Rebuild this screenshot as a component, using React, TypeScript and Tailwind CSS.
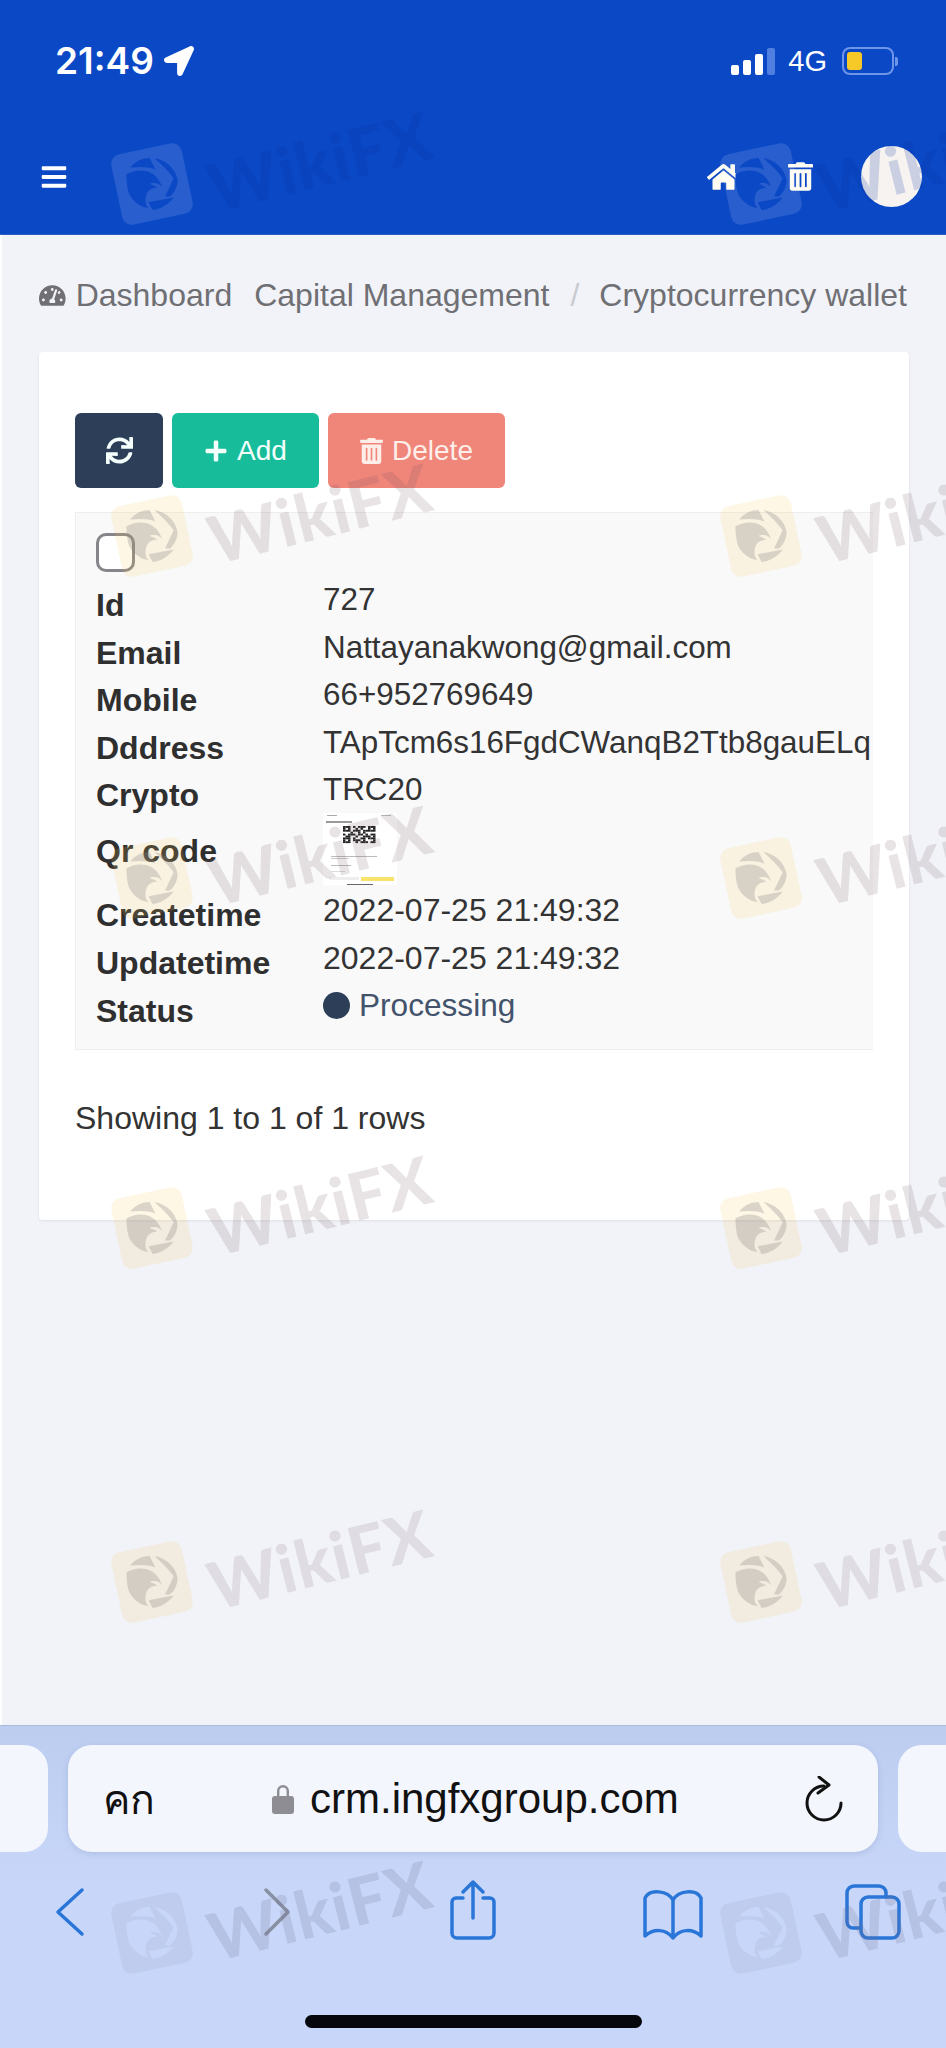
import { FaBars, FaHome, FaLocationArrow, FaPlus, FaSync, FaTachometerAlt, FaTrashAlt } from "react-icons/fa";

const marks = [
  { top: "top-[148px]", tile: "bg-[#ffffff]/12", bird: "text-[#0b48c6]", word: "text-[#062f9c]/18" },
  { top: "top-[500px]", tile: "bg-[#f8c95a]/15", bird: "text-[#8c8486]/30", word: "text-[#6e5a60]/16" },
  { top: "top-[842px]", tile: "bg-[#f8c95a]/15", bird: "text-[#8c8486]/30", word: "text-[#6e5a60]/16" },
  { top: "top-[1192px]", tile: "bg-[#f8c95a]/15", bird: "text-[#8c8486]/30", word: "text-[#6e5a60]/16" },
  { top: "top-[1546px]", tile: "bg-[#f8c95a]/15", bird: "text-[#8c8486]/30", word: "text-[#6e5a60]/14" },
  { top: "top-[1897px]", tile: "bg-[#8c8aa8]/15", bird: "text-[#c8d7f9]", word: "text-[#6c6c90]/20" },
];

const Watermark = ({ tile, bird, word }: { tile: string; bird: string; word: string }) => (
  <div className="flex items-center gap-[18px] w-[340px] shrink-0">
    <div className={`w-[72px] h-[72px] rounded-[10px] -rotate-[12deg] flex items-center justify-center shrink-0 ${tile}`}>
      <svg viewBox="0 0 55 56" className={`w-[54px] h-[54px] rotate-[12deg] ${bird}`} fill="currentColor">
        <path d="M1 18C8 14 16 13 23 15C30 17 35 23 38 31C35 28 33 27 30 27C28 27 26 27 25 28C28 29 31 30 33 32C28 32 24 34 22 38C20 44 20 49 24 53C15 52 6 45 3 36C1.5 30 1 24 1 18Z" />
        <path d="M5 11C10 4 18 1 25 1L31 13C24 10 14 10 5 11Z" />
        <path d="M30 1C42 3 52 12 54 24C54 30 51 37 46 41L41 41L50 22C44 14 38 8 30 1Z" />
        <path d="M24 47L50 42C44 50 36 54 28 55Z" />
      </svg>
    </div>
    <span className={`[font-family:Lato,sans-serif] font-black text-[66px] leading-none tracking-[1px] -rotate-[14deg] -translate-y-[23px] ${word}`}>WikiFX</span>
  </div>
);

const rows = [
  { label: "Id", value: "727" },
  { label: "Email", value: "Nattayanakwong@gmail.com" },
  { label: "Mobile", value: "66+952769649" },
  { label: "Dddress", value: "TApTcm6s16FgdCWanqB2Ttb8gauELq" },
  { label: "Crypto", value: "TRC20" },
];

const qrCells = [
  "1110101110111", "1010010100101", "1110111011111", "0001001010000", "1011101101011",
  "0110010011101", "1110100110111", "1010111010001", "1110010111011",
];

const QrThumb = () => (
  <svg viewBox="0 0 74 72" className="w-[74px] h-[72px] -mt-[7px] blur-[0.4px]">
    <rect width="74" height="72" fill="#ffffff" />
    <rect x="4" y="2" width="10" height="1" fill="#aaaaaa" />
    <rect x="58" y="2" width="10" height="1" fill="#bbbbbb" />
    <rect x="3" y="8" width="26" height="2" fill="#999999" />
    {qrCells.map((row, y) =>
      row.split("").map((c, x) =>
        c === "1" ? <rect key={`${x}-${y}`} x={20 + x * 2.5} y={13 + y * 1.9} width="2.5" height="1.9" fill="#222222" /> : null,
      ),
    )}
    <rect x="8" y="43" width="46" height="1" fill="#bbbbbb" />
    <rect x="8" y="45" width="18" height="1" fill="#cccccc" />
    <rect x="8" y="52" width="20" height="1" fill="#bbbbbb" />
    <rect x="8" y="58" width="14" height="1" fill="#dddddd" />
    <rect x="6" y="64" width="30" height="3" fill="#eeeeee" />
    <rect x="38" y="64" width="33" height="4" fill="#fbe36a" />
    <rect x="24" y="71" width="26" height="1" fill="#666666" />
  </svg>
);

const Label = ({ children }: { children: string }) => (
  <div className="w-[227px] shrink-0 pt-[5px] font-bold text-[#2f2f2f] leading-[36px]">{children}</div>
);

export default function App() {
  return (
    <div className="relative w-[946px] h-[2048px] overflow-hidden flex flex-col bg-[#f1f3f8] [font-family:'Liberation_Sans',Arial,sans-serif]">
      <header className="h-[235px] shrink-0 bg-[#0b48c6] border-b border-[#2f5cc0] text-white">
        <div className="flex items-center justify-between pl-[55px] pr-[48px] pt-[22px] h-[100px]">
          <div className="flex items-center gap-[10px]">
            <span className="text-[37px] font-semibold leading-[40px] [font-family:Inter,sans-serif]">21:49</span>
            <FaLocationArrow className="w-[30px] h-[30px]" />
          </div>
          <div className="flex items-center">
            <div className="flex items-end gap-[4px] h-[27px]">
              <span className="w-[8px] h-[10px] rounded-[2px] bg-white" />
              <span className="w-[8px] h-[15px] rounded-[2px] bg-white" />
              <span className="w-[8px] h-[21px] rounded-[2px] bg-white" />
              <span className="w-[8px] h-[27px] rounded-[2px] bg-[#4f7fe0]" />
            </div>
            <span className="ml-[13px] text-[29px] leading-none">4G</span>
            <div className="ml-[15px] w-[52px] h-[28px] rounded-[8px] border-2 border-[#6d95e8] p-[3px]">
              <div className="w-[15px] h-full rounded-[3px] bg-[#f7c928]" />
            </div>
            <span className="ml-[1px] w-[3px] h-[9px] rounded-r-[2px] bg-[#6d95e8]" />
          </div>
        </div>
        <div className="flex items-center justify-between pl-[40px] pr-[24px] pt-[46px]">
          <FaBars className="w-[28px] h-[28px]" />
          <div className="flex items-center">
            <FaHome className="w-[33px] h-[30px] text-[#fffdf3]" />
            <FaTrashAlt className="ml-[48px] w-[25px] h-[29px] text-[#fffdf3]" />
            <div className="ml-[48px] w-[61px] h-[61px] rounded-full bg-[#f6f3f1]" />
          </div>
        </div>
      </header>

      <main className="flex-1 min-h-0 px-[39px] border-l-2 border-white">
        <nav className="flex items-center h-[117px] pt-[3px] -ml-[2px] text-[32px] text-[#6f6f74] whitespace-nowrap">
          <FaTachometerAlt className="w-[33px] h-[33px]" />
          <span className="ml-[10px]">Dashboard</span>
          <span className="ml-[22px]">Capital Management</span>
          <span className="ml-[21px] text-[#c9cbd0]">/</span>
          <span className="ml-[20px]">Cryptocurrency wallet</span>
        </nav>

        <section className="w-[870px] h-[868px] -ml-[2px] bg-white rounded-[4px] shadow-[0_1px_3px_rgba(0,0,0,0.08)] px-[36px] pt-[61px] text-[32px]">
          <div className="flex gap-[9px] text-[28px] text-[#f4fffb]">
            <button className="w-[88px] h-[75px] rounded-[6px] bg-[#2c3e58] flex items-center justify-center">
              <FaSync className="w-[27px] h-[27px]" />
            </button>
            <button className="w-[147px] h-[75px] rounded-[6px] bg-[#17bd9b] flex items-center justify-center gap-[9px]">
              <FaPlus className="w-[24px] h-[24px]" />
              Add
            </button>
            <button className="w-[177px] h-[75px] rounded-[6px] bg-[#f0857a] flex items-center justify-center gap-[9px] text-[#fdeeea]">
              <FaTrashAlt className="w-[23px] h-[26px]" />
              Delete
            </button>
          </div>

          <div className="mt-[24px] w-[798px] h-[538px] overflow-hidden bg-[#f9f9fa] border border-r-0 border-[#eeeeee] pl-[20px] pt-[20px] whitespace-nowrap">
            <div className="w-[39px] h-[39px] rounded-[10px] border-[3px] border-[#85858a] bg-white" />
            <div className="mt-[10px]">
              {rows.map((r) => (
                <div key={r.label} className="flex h-[47.5px]">
                  <Label>{r.label}</Label>
                  <div className="leading-[36px] text-[31.4px] text-[#333333]">{r.value}</div>
                </div>
              ))}
              <div className="flex items-start h-[72px]">
                <div className="w-[227px] shrink-0 pt-[13px] leading-[36px] font-bold text-[#2f2f2f]">Qr code</div>
                <QrThumb />
              </div>
              {["Createtime", "Updatetime"].map((label) => (
                <div key={label} className="flex h-[48px]">
                  <Label>{label}</Label>
                  <div className="leading-[36px] text-[#333333]">2022-07-25 21:49:32</div>
                </div>
              ))}
              <div className="flex h-[48px]">
                <Label>Status</Label>
                <div className="flex items-center h-[36px] text-[31.6px] text-[#43536b]">
                  <span className="w-[27px] h-[27px] rounded-full bg-[#2c3e58]" />
                  <span className="ml-[9px]">Processing</span>
                </div>
              </div>
            </div>
          </div>

          <p className="mt-[44px] text-[#333333]">Showing 1 to 1 of 1 rows</p>
        </section>
      </main>

      <footer className="h-[323px] shrink-0 border-t border-[#a9bbdc] bg-gradient-to-b from-[#bccdf0] to-[#c8d7f9] to-[50%] flex flex-col">
        <div className="flex mt-[19px] h-[107px]">
          <div className="w-[48px] shrink-0 rounded-r-[24px] bg-[#f4f6fe]" />
          <div className="mx-[20px] flex-1 rounded-[24px] bg-[#f4f6fe] flex items-center pl-[35px] pr-[35px] text-[#111111] shadow-[0_2px_6px_rgba(90,110,160,0.2)]">
            <span className="w-[52px] text-[41px] leading-none [font-family:'Noto_Sans',sans-serif]">คก</span>
            <svg viewBox="0 0 22 31" className="ml-[117px] w-[22px] h-[31px]" fill="#8d8d93">
              <path d="M5 14V8a6 6 0 0 1 12 0v6h-2.4V8a3.6 3.6 0 0 0-7.2 0v6z" />
              <rect x="0" y="13" width="22" height="18" rx="3" />
            </svg>
            <span className="ml-[16px] text-[42px] leading-none">crm.ingfxgroup.com</span>
            <svg viewBox="0 0 38 46" className="ml-auto w-[38px] h-[46px]" fill="none" stroke="#111111" strokeWidth="3" strokeLinecap="round" strokeLinejoin="round">
              <path d="M19 10A17 17 0 1 0 36 27" />
              <path d="M14 1l10 8-11 8" />
            </svg>
          </div>
          <div className="w-[48px] shrink-0 rounded-l-[24px] bg-[#f4f6fe]" />
        </div>

        <div className="relative flex-1">
          <svg viewBox="0 0 946 80" className="absolute left-0 top-[20px] w-[946px] h-[80px]" fill="none" strokeWidth="3.5" strokeLinecap="round" strokeLinejoin="round">
            <g stroke="#2a76d8">
              <path d="M82 18L58 40l24 22" />
              <path d="M473 10v36M463 20l10-10 10 10" />
              <path d="M463 26h-7a4 4 0 0 0-4 4v31a5 5 0 0 0 5 5h32a5 5 0 0 0 5-5V30a4 4 0 0 0-4-4h-7" />
              <path d="M673 28C668 19 650 16 645 26V64C654 56 666 57 673 66C680 57 692 56 701 64V26C696 16 678 19 673 28ZM673 28V66" />
              <path d="M859 56h-6a6 6 0 0 1-6-6V21a7 7 0 0 1 7-7h25a7 7 0 0 1 7 7v4" />
              <rect x="861" y="25" width="38" height="41" rx="7" />
            </g>
            <path d="M266 18l22 22-22 22" stroke="#8a90a4" />
          </svg>
          <div className="absolute left-[305px] top-[163px] w-[337px] h-[13px] rounded-full bg-[#05070d]" />
        </div>
      </footer>

      {marks.map((m) => (
        <div key={m.top} className={`absolute inset-x-0 pointer-events-none ${m.top}`}>
          <div className="flex pl-[116px] gap-[269px]">
            <Watermark tile={m.tile} bird={m.bird} word={m.word} />
            <Watermark tile={m.tile} bird={m.bird} word={m.word} />
          </div>
        </div>
      ))}
    </div>
  );
}
